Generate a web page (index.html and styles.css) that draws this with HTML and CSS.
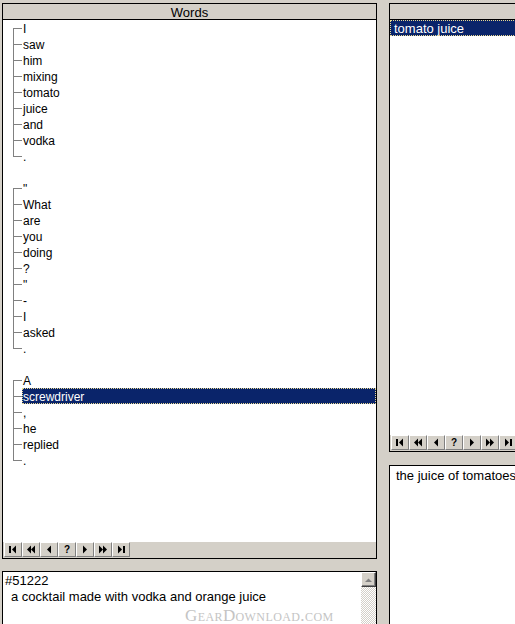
FILE: index.html
```html
<!DOCTYPE html>
<html lang="en">

<head>
  <meta charset="UTF-8">
  <meta name="viewport" content="width=device-width, initial-scale=1.0">
  <title>Words</title>
  <link rel="stylesheet" href="styles.css">
</head>

<body>

  <div class="window">

    <div class="column left-column">
      <div class="panel words-panel">
        <div class="panel-header">Words</div>
        <div class="panel-list">
          <ul class="sentence">
            <li class="node first">I</li>
            <li class="node">saw</li>
            <li class="node">him</li>
            <li class="node">mixing</li>
            <li class="node">tomato</li>
            <li class="node">juice</li>
            <li class="node">and</li>
            <li class="node">vodka</li>
            <li class="node last">.</li>
          </ul>
          <ul class="sentence">
            <li class="node first">"</li>
            <li class="node">What</li>
            <li class="node">are</li>
            <li class="node">you</li>
            <li class="node">doing</li>
            <li class="node">?</li>
            <li class="node">"</li>
            <li class="node">-</li>
            <li class="node">I</li>
            <li class="node">asked</li>
            <li class="node last">.</li>
          </ul>
          <ul class="sentence">
            <li class="node first">A</li>
            <li class="node"><span class="label selected">screwdriver</span></li>
            <li class="node">,</li>
            <li class="node">he</li>
            <li class="node">replied</li>
            <li class="node last">.</li>
          </ul>
        </div>
        <div class="nav-bar">
          <button class="nav-btn"><svg width="12" height="9" viewBox="0 0 12 9"><rect x="2" y="1" width="2" height="7"/><polygon points="9,0.5 9,8.5 5,4.5"/></svg></button>
          <button class="nav-btn"><svg width="12" height="9" viewBox="0 0 12 9"><polygon points="6,0.5 6,8.5 2,4.5"/><polygon points="10,0.5 10,8.5 6,4.5"/></svg></button>
          <button class="nav-btn"><svg width="12" height="9" viewBox="0 0 12 9"><polygon points="8,0.5 8,8.5 4,4.5"/></svg></button>
          <button class="nav-btn"><span class="nav-q">?</span></button>
          <button class="nav-btn"><svg width="12" height="9" viewBox="0 0 12 9"><polygon points="4,0.5 4,8.5 8,4.5"/></svg></button>
          <button class="nav-btn"><svg width="12" height="9" viewBox="0 0 12 9"><polygon points="2,0.5 2,8.5 6,4.5"/><polygon points="6,0.5 6,8.5 10,4.5"/></svg></button>
          <button class="nav-btn"><svg width="12" height="9" viewBox="0 0 12 9"><polygon points="3,0.5 3,8.5 7,4.5"/><rect x="8" y="1" width="2" height="7"/></svg></button>
        </div>
      </div>

      <div class="text-box gloss-box">
        <div class="gloss-text">
          <div class="gloss-id">#51222</div>
          <div class="gloss-def">a cocktail made with vodka and orange juice</div>
          <div class="watermark">GearDownload.com</div>
        </div>
        <div class="scrollbar">
          <div class="scroll-up"><svg width="7" height="4" viewBox="0 0 7 4"><polygon points="0,4 7,4 3.5,0.5"/></svg></div>
          <div class="scroll-track"></div>
        </div>
      </div>
    </div>

    <div class="column right-column">
      <div class="panel phrase-panel">
        <div class="panel-header"></div>
        <div class="panel-list">
          <div class="phrase selected">tomato juice</div>
        </div>
        <div class="nav-bar">
          <button class="nav-btn"><svg width="12" height="9" viewBox="0 0 12 9"><rect x="2" y="1" width="2" height="7"/><polygon points="9,0.5 9,8.5 5,4.5"/></svg></button>
          <button class="nav-btn"><svg width="12" height="9" viewBox="0 0 12 9"><polygon points="6,0.5 6,8.5 2,4.5"/><polygon points="10,0.5 10,8.5 6,4.5"/></svg></button>
          <button class="nav-btn"><svg width="12" height="9" viewBox="0 0 12 9"><polygon points="8,0.5 8,8.5 4,4.5"/></svg></button>
          <button class="nav-btn"><span class="nav-q">?</span></button>
          <button class="nav-btn"><svg width="12" height="9" viewBox="0 0 12 9"><polygon points="4,0.5 4,8.5 8,4.5"/></svg></button>
          <button class="nav-btn"><svg width="12" height="9" viewBox="0 0 12 9"><polygon points="2,0.5 2,8.5 6,4.5"/><polygon points="6,0.5 6,8.5 10,4.5"/></svg></button>
          <button class="nav-btn"><svg width="12" height="9" viewBox="0 0 12 9"><polygon points="3,0.5 3,8.5 7,4.5"/><rect x="8" y="1" width="2" height="7"/></svg></button>
        </div>
      </div>

      <div class="text-box definition-box">
        <div class="definition-text">the juice of tomatoes</div>
      </div>
    </div>

  </div>

</body>

</html>
```

FILE: styles.css
```css
html,
body {
  margin: 0;
  height: 100%;
  overflow: hidden;
}

body {
  font-family: "Liberation Sans", Arial, sans-serif;
  font-size: 13px;
  background-color: #d4d0c8;
  color: #000;
}

.window {
  display: flex;
  gap: 12px;
  padding: 3px 0 0 2px;
}

.column {
  display: flex;
  flex-direction: column;
  flex: none;
}

.left-column {
  width: 375px;
  gap: 12px;
}

.right-column {
  width: 200px;
  gap: 13px;
}

.panel {
  display: flex;
  flex-direction: column;
  border: 1px solid #000;
  box-sizing: border-box;
}

.words-panel {
  height: 556px;
}

.phrase-panel {
  height: 449px;
}

.panel-header {
  height: 15px;
  line-height: 17px;
  text-align: center;
  background-color: #d4d0c8;
  border-bottom: 1px solid #000;
  font-size: 13px;
  overflow: hidden;
}

.panel-list {
  flex: 1;
  background: white;
  overflow: hidden;
}

.sentence {
  list-style: none;
  margin: 0 0 16px 0;
  padding: 0;
}

.node {
  height: 16px;
  line-height: 18px;
  font-size: 12px;
  padding-left: 20px;
  white-space: nowrap;
  background:
    linear-gradient(#808080, #808080) 10px 8px / 9px 1px no-repeat,
    linear-gradient(#808080, #808080) 10px 0 / 1px 16px no-repeat;
}

.node.first {
  background:
    linear-gradient(#808080, #808080) 10px 8px / 9px 1px no-repeat,
    linear-gradient(#808080, #808080) 10px 8px / 1px 8px no-repeat;
}

.node.last {
  background:
    linear-gradient(#808080, #808080) 10px 8px / 9px 1px no-repeat,
    linear-gradient(#808080, #808080) 10px 0 / 1px 9px no-repeat;
}

.label {
  display: block;
  height: 16px;
  margin-left: -1px;
  padding-left: 1px;
}

.selected {
  background-color: #0a246a;
  color: white;
  outline: 1px dotted #e8d890;
  outline-offset: -1px;
}

.phrase {
  height: 16px;
  line-height: 17px;
  padding-left: 4px;
  white-space: nowrap;
}

.nav-bar {
  display: flex;
  height: 16px;
  padding: 0 0 0 1px;
  background-color: #d4d0c8;
}

.nav-btn {
  display: flex;
  align-items: center;
  justify-content: center;
  width: 18px;
  height: 15px;
  margin: 0;
  padding: 0;
  background-color: #d4d0c8;
  border: 1px solid;
  border-color: #fff #808080 #808080 #fff;
  box-shadow: inset -1px -1px 0 #d4d0c8;
  fill: #000;
}

.nav-q {
  font-family: "Liberation Sans", Arial, sans-serif;
  font-size: 10px;
  font-weight: bold;
  line-height: 10px;
}

.text-box {
  background: white;
  border: 1px solid #000;
  height: 200px;
}

.gloss-box {
  display: flex;
}

.gloss-text {
  position: relative;
  flex: 1;
  line-height: 17px;
  padding: 0 2px;
}

.gloss-id {
  height: 16px;
}

.gloss-def {
  height: 16px;
  padding-left: 6px;
}

.watermark {
  position: absolute;
  left: 182px;
  top: 35px;
  font-family: "Liberation Serif", serif;
  font-variant: small-caps;
  font-size: 17px;
  letter-spacing: 0.4px;
  color: #c4c4c4;
}

.scrollbar {
  display: flex;
  flex-direction: column;
  width: 15px;
}

.scroll-up {
  display: flex;
  align-items: center;
  justify-content: center;
  box-sizing: border-box;
  height: 15px;
  background-color: #d4d0c8;
  border: 1px solid;
  border-color: #fff #404040 #404040 #fff;
  box-shadow: inset -1px -1px 0 #808080;
  fill: #808080;
}

.scroll-track {
  flex: 1;
  background-color: #fff;
  background-image: repeating-conic-gradient(#d4d0c8 0 25%, #fff 0 50%);
  background-size: 2px 2px;
}

.definition-box {
  padding: 1px 6px;
  line-height: 17px;
  white-space: nowrap;
}
```
